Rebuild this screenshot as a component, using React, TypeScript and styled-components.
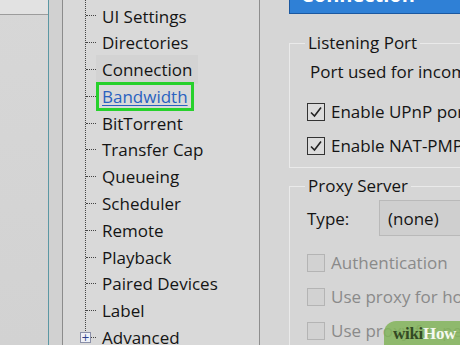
import React from "react";
import styled, { createGlobalStyle } from "styled-components";

const GlobalStyle = createGlobalStyle`
  html, body {
    margin: 0;
    padding: 0;
    background: #d6d6d6;
  }
  body {
    font-family: "Open Sans", "Noto Sans", sans-serif;
  }
`;

const Window = styled.div`
  width: 460px;
  height: 345px;
  overflow: hidden;
  display: flex;
  background: #d6d6d6;
  color: #141414;
  position: relative;
`;

const SidePane = styled.div`
  width: 48px;
  flex-shrink: 0;
  border-right: 1px solid #5b97a3;
  background: linear-gradient(#d7d7d7, #d2d2d2);
`;

const SideTop = styled.div`
  height: 14px;
  background: #e2e2e2;
  border-bottom: 1px solid #9c9c9c;
`;

const Gutter = styled.div`
  width: 13px;
  flex-shrink: 0;
  background: #d1d1d1;
  border-right: 1px solid #8c8c8c;
`;

const TreePane = styled.div`
  width: 197px;
  flex-shrink: 0;
  background: #d9d9d9;
  border-right: 1px solid #8e8e8e;
  padding-left: 22px;
  box-sizing: border-box;
`;

const TreeList = styled.div`
  border-left: 1px dotted #444;
  padding-top: 2.6px;
  height: 331px;
  box-sizing: border-box;
`;

const Row = styled.div`
  height: 26.8px;
  display: flex;
  align-items: center;
  position: relative;
  white-space: nowrap;
`;

const Connector = styled.span`
  width: 10px;
  border-top: 1px dotted #444;
  flex-shrink: 0;
`;

const Label = styled.span<{ $state?: "selected" | "hover" }>`
  font-size: 17px;
  line-height: 23px;
  padding: 0 3px 0 3px;
  border: 3px solid
    ${(p) => (p.$state === "selected" ? "#27d12c" : "transparent")};
  background: ${(p) => (p.$state === "hover" ? "#d3d3d3" : "transparent")};
  color: ${(p) => (p.$state === "selected" ? "#2a62c0" : "#141414")};
  text-decoration: ${(p) => (p.$state === "selected" ? "underline" : "none")};
  text-underline-offset: 2px;
`;

const Expander = styled.span`
  position: absolute;
  left: -6px;
  top: 8px;
  width: 9px;
  height: 9px;
  border: 1px solid #8a8fa8;
  background: #eef0f6;
  font-size: 10px;
  line-height: 9px;
  text-align: center;
  color: #2c3e8c;
  font-family: "DejaVu Sans", sans-serif;
`;

const RightPane = styled.div`
  flex: 1;
  padding-left: 29px;
  display: flex;
  flex-direction: column;
`;

const Header = styled.div`
  margin-top: -18px;
  height: 32px;
  width: 260px;
  flex-shrink: 0;
  background: #2f80d6;
  border-left: 1px solid #1b58a0;
  border-bottom: 1px solid #1b58a0;
  color: #fff;
  font-weight: 700;
  font-size: 20px;
  line-height: 26px;
  padding-left: 11px;
  box-sizing: border-box;
  overflow: hidden;
`;

const Group = styled.fieldset<{ $height: number; $gap: number }>`
  margin: ${(p) => p.$gap}px 0 0 0;
  padding: 0 0 0 15px;
  width: 260px;
  height: ${(p) => p.$height}px;
  border: 1px solid #eaeaea;
  border-right: none;
  box-sizing: border-box;
  flex-shrink: 0;
`;

const Legend = styled.legend`
  font-size: 17px;
  padding: 0 3px;
  margin-left: 0;
  line-height: 22px;
`;

const Text = styled.div`
  font-size: 17px;
  line-height: 22px;
  margin-top: 7px;
  white-space: nowrap;
  margin-left: 5px;
`;

const CheckRow = styled.label<{ $disabled?: boolean; $gap?: number }>`
  display: flex;
  align-items: center;
  gap: 6px;
  font-size: 17px;
  line-height: 22px;
  white-space: nowrap;
  margin-top: ${(p) => p.$gap ?? 12}px;
  margin-left: 2px;
  color: ${(p) => (p.$disabled ? "#8a8a8a" : "#141414")};
`;

const Box = styled.span<{ $disabled?: boolean }>`
  width: 16px;
  height: 16px;
  flex-shrink: 0;
  border: 1px solid ${(p) => (p.$disabled ? "#b4b4b4" : "#333")};
  background: ${(p) => (p.$disabled ? "#d2d2d2" : "#dcdcdc")};
  display: flex;
  align-items: center;
  justify-content: center;
`;

const TypeRow = styled.div`
  display: flex;
  align-items: center;
  margin-top: 3px;
  margin-left: 2px;
  font-size: 17px;
`;

const TypeLabel = styled.span`
  width: 72px;
`;

const Select = styled.div`
  height: 36px;
  width: 120px;
  border: 1px solid #b9b9b9;
  background: #cfcfcf;
  box-sizing: border-box;
  padding-left: 8px;
  display: flex;
  align-items: center;
`;

const Logo = styled.div`
  position: absolute;
  right: 0;
  bottom: 0;
  width: 76px;
  height: 24px;
  background: rgba(130, 180, 90, 0.85);
  border-top-left-radius: 12px;
  font-family: "Liberation Serif", serif;
  font-weight: 700;
  font-size: 17px;
  line-height: 26px;
  padding-left: 9px;
  box-sizing: border-box;
  letter-spacing: -0.3px;
`;

const Wiki = styled.span`
  color: #334a24;
`;

const How = styled.span`
  color: #f4f8ef;
`;

const Check = () => (
  <svg width="14" height="14" viewBox="0 0 14 14">
    <path d="M2 7.5 L5.5 11 L12 2.5" fill="none" stroke="#222" strokeWidth="1.6" />
  </svg>
);

const items: { name: string; state?: "selected" | "hover" }[] = [
  { name: "UI Settings" },
  { name: "Directories" },
  { name: "Connection", state: "hover" },
  { name: "Bandwidth", state: "selected" },
  { name: "BitTorrent" },
  { name: "Transfer Cap" },
  { name: "Queueing" },
  { name: "Scheduler" },
  { name: "Remote" },
  { name: "Playback" },
  { name: "Paired Devices" },
  { name: "Label" },
  { name: "Advanced" },
];

const App: React.FC = () => {
  return (
    <>
      <GlobalStyle />
      <Window>
        <SidePane>
          <SideTop />
        </SidePane>
        <Gutter />
        <TreePane>
          <TreeList>
            {items.map((item) => (
              <Row key={item.name}>
                {item.name === "Advanced" && <Expander>+</Expander>}
                <Connector />
                <Label $state={item.state}>{item.name}</Label>
              </Row>
            ))}
          </TreeList>
        </TreePane>
        <RightPane>
          <Header>Connection</Header>
          <Group $height={136} $gap={18}>
            <Legend>Listening Port</Legend>
            <Text>Port used for incoming connections:</Text>
            <CheckRow $gap={18}>
              <Box>
                <Check />
              </Box>
              Enable UPnP port mapping
            </CheckRow>
            <CheckRow $gap={12}>
              <Box>
                <Check />
              </Box>
              Enable NAT-PMP port mapping
            </CheckRow>
          </Group>
          <Group $height={200} $gap={7}>
            <Legend>Proxy Server</Legend>
            <TypeRow>
              <TypeLabel>Type:</TypeLabel>
              <Select>(none)</Select>
            </TypeRow>
            <CheckRow $disabled $gap={16}>
              <Box $disabled />
              Authentication
            </CheckRow>
            <CheckRow $disabled>
              <Box $disabled />
              Use proxy for hostname lookups
            </CheckRow>
            <CheckRow $disabled>
              <Box $disabled />
              Use proxy for peer-to-peer connections
            </CheckRow>
          </Group>
        </RightPane>
        <Logo>
          <Wiki>wiki</Wiki>
          <How>How</How>
        </Logo>
      </Window>
    </>
  );
};

export default App;
